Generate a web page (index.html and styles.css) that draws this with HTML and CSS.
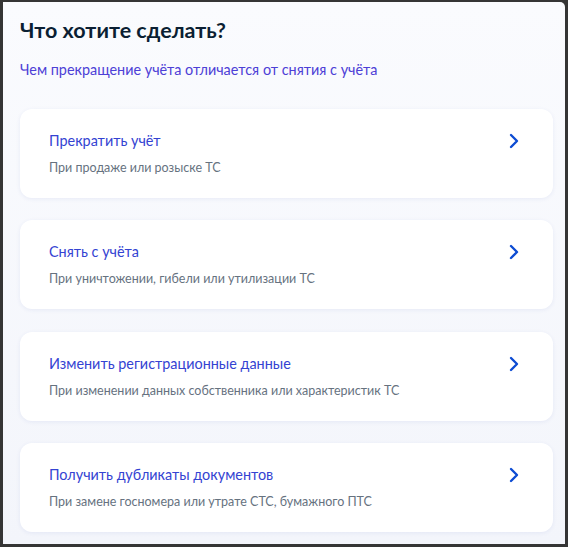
FILE: index.html
```html
<!DOCTYPE html>
<html lang="ru">
<head>
<meta charset="utf-8">
<link rel="stylesheet" href="styles.css">
</head>
<body>
<div class="page">
  <h1 class="title">Что хотите сделать?</h1>
  <a class="hint" href="#">Чем прекращение учёта отличается от снятия с учёта</a>
  <div class="list">
    <a class="card" href="#">
      <div class="text">
        <div class="card-title">Прекратить учёт</div>
        <div class="card-sub">При продаже или розыске ТС</div>
      </div>
      <svg class="chev" width="10" height="16" viewBox="0 0 10 16"><path d="M2 2 L8 8 L2 14" fill="none" stroke="#0d4cd3" stroke-width="2.4" stroke-linecap="round" stroke-linejoin="round"/></svg>
    </a>
    <a class="card" href="#">
      <div class="text">
        <div class="card-title">Снять с учёта</div>
        <div class="card-sub">При уничтожении, гибели или утилизации ТС</div>
      </div>
      <svg class="chev" width="10" height="16" viewBox="0 0 10 16"><path d="M2 2 L8 8 L2 14" fill="none" stroke="#0d4cd3" stroke-width="2.4" stroke-linecap="round" stroke-linejoin="round"/></svg>
    </a>
    <a class="card" href="#">
      <div class="text">
        <div class="card-title">Изменить регистрационные данные</div>
        <div class="card-sub">При изменении данных собственника или характеристик ТС</div>
      </div>
      <svg class="chev" width="10" height="16" viewBox="0 0 10 16"><path d="M2 2 L8 8 L2 14" fill="none" stroke="#0d4cd3" stroke-width="2.4" stroke-linecap="round" stroke-linejoin="round"/></svg>
    </a>
    <a class="card" href="#">
      <div class="text">
        <div class="card-title">Получить дубликаты документов</div>
        <div class="card-sub">При замене госномера или утрате СТС, бумажного ПТС</div>
      </div>
      <svg class="chev" width="10" height="16" viewBox="0 0 10 16"><path d="M2 2 L8 8 L2 14" fill="none" stroke="#0d4cd3" stroke-width="2.4" stroke-linecap="round" stroke-linejoin="round"/></svg>
    </a>
  </div>
</div>
</body>
</html>
```
FILE: styles.css
```css
html, body {
  margin: 0;
  padding: 0;
  height: 100%;
  background: #353535;
}
body {
  font-family: Lato, "Noto Sans", sans-serif;
  padding: 2px 3px 3px 3px;
  box-sizing: border-box;
}
.page {
  height: 100%;
  box-sizing: border-box;
  background: linear-gradient(#fafbfe, #f3f5fb);
  border-top-right-radius: 5px;
  padding: 14px 12px 0 17px;
  overflow: hidden;
}
.title {
  margin: 0;
  font-size: 21.5px;
  line-height: 28px;
  font-weight: 700;
  color: #0b1f33;
}
.hint {
  display: block;
  margin-top: 16px;
  font-size: 14.4px;
  line-height: 20px;
  color: #4d40d6;
  text-decoration: none;
}
.list {
  margin-top: 29px;
  display: flex;
  flex-direction: column;
  gap: 22.3px;
}
.card {
  display: flex;
  align-items: flex-start;
  justify-content: space-between;
  background: #fff;
  border-radius: 12px;
  box-shadow: 0 1px 4px rgba(40, 70, 160, 0.08);
  padding: 22px 34px 21px 29px;
  text-decoration: none;
}
.card-title {
  font-size: 14.4px;
  line-height: 20px;
  color: #3443d2;
}
.card-sub {
  margin-top: 8px;
  font-size: 12.5px;
  line-height: 18px;
  color: #66727f;
}
.chev {
  margin-top: 2px;
  flex: none;
}
```
